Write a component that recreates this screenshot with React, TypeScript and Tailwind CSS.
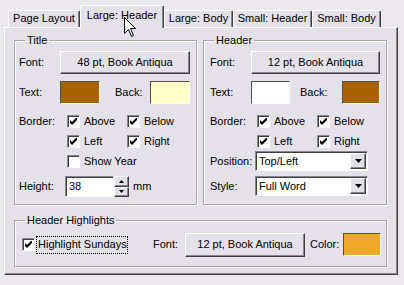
import React from "react";

const raised =
  "border-t border-l border-t-white border-l-white border-r border-b border-r-[#404040] border-b-[#404040] shadow-[inset_-1px_-1px_0_#8a8690]";
const sunken =
  "border-t border-l border-t-[#8a8690] border-l-[#8a8690] border-r border-b border-r-white border-b-white shadow-[inset_1px_1px_0_#404040]";

function Check({ checked }: { checked: boolean }) {
  return (
    <span className={`w-[13px] h-[13px] bg-white shrink-0 flex items-center justify-center ${sunken}`}>
      {checked && (
        <svg width="7" height="7" viewBox="0 0 7 7">
          <path d="M0 2 L2 4 L7 -1 L7 2 L2 7 L0 5 Z" fill="#000" />
        </svg>
      )}
    </span>
  );
}

function CheckItem({ label, checked, w }: { label: string; checked: boolean; w: string }) {
  return (
    <div className={`flex items-center gap-[4px] ${w}`}>
      <Check checked={checked} />
      <span>{label}</span>
    </div>
  );
}

function Btn({ children, w, h }: { children: React.ReactNode; w: string; h: string }) {
  return (
    <div className={`${w} ${h} ${raised} bg-[#e5e1e9] flex items-center justify-center shrink-0 whitespace-nowrap`}>{children}</div>
  );
}

function Swatch({ color, w }: { color: string; w: string }) {
  return (
    <div
      className={`${w} h-[23px] shrink-0 border-t border-l border-t-[#505050] border-l-[#505050] border-r border-b border-r-white border-b-white ${color}`}
    />
  );
}

function Select({ value }: { value: string }) {
  return (
    <div className={`w-[113px] h-[20px] bg-white flex items-center ${sunken}`}>
      <span className="flex-1 pl-[3px] pt-[1px]">{value}</span>
      <div className={`w-[16px] h-[16px] mr-[1px] bg-[#e5e1e9] ${raised} flex items-center justify-center`}>
        <svg width="7" height="4" viewBox="0 0 7 4">
          <path d="M0 0 H7 L3.5 4 Z" fill="#000" />
        </svg>
      </div>
    </div>
  );
}

function Group({ title, className, children }: { title: string; className: string; children: React.ReactNode }) {
  return (
    <fieldset
      className={`border border-[#a9a5ad] shadow-[inset_1px_1px_0_white,1px_1px_0_white] ${className}`}
    >
      <legend className="ml-[10px] px-[2px] leading-[13px]">{title}</legend>
      {children}
    </fieldset>
  );
}

export default function App() {
  const tabBase =
    "flex items-center justify-center whitespace-nowrap border-t border-l border-t-white border-l-white border-r border-r-[#404040] shadow-[inset_-1px_0_0_#8a8690] rounded-t-[2px] bg-[#e5e1e9]";
  return (
    <div
      className="relative w-[404px] h-[285px] overflow-hidden bg-[#ebe8ee] pt-[5px] pl-[4px] text-[11px] text-black"
      style={{ fontFamily: '"Liberation Sans", Arial, sans-serif' }}
    >
      <div className="flex items-end h-[22px] pl-[4px]">
        <div className={`${tabBase} w-[72px] h-[17px] pb-[1px]`}>Page Layout</div>
        <div className={`${tabBase} w-[84px] h-[23px] mb-[-1px] relative z-10 pb-[3px]`}>Large: Header</div>
        <div className={`${tabBase} w-[69px] h-[17px] pb-[1px]`}>Large: Body</div>
        <div className={`${tabBase} w-[79px] h-[17px] pb-[1px]`}>Small: Header</div>
        <div className={`${tabBase} w-[69px] h-[17px] pb-[1px]`}>Small: Body</div>
      </div>
      <div className={`w-[394px] h-[248px] bg-[#e5e1e9] ${raised} pt-[6px] pl-[9px]`}>
        <div className="flex gap-[6px]">
          <Group title="Title" className="w-[183px] h-[171px]">
            <div className="pl-[4px] pt-[4px] flex flex-col">
              <div className="flex items-center h-[23px]">
                <span className="w-[41px]">Font:</span>
                <Btn w="w-[130px]" h="h-[23px]">48 pt, Book Antiqua</Btn>
              </div>
              <div className="flex items-center h-[23px] mt-[7px]">
                <span className="w-[41px]">Text:</span>
                <Swatch color="bg-[#a86200]" w="w-[40px]" />
                <span className="w-[35px] ml-[15px]">Back:</span>
                <Swatch color="bg-[#ffffc8]" w="w-[40px]" />
              </div>
              <div className="flex items-center h-[20px] mt-[7px]">
                <span className="w-[48px]">Border:</span>
                <CheckItem label="Above" checked w="w-[60px]" />
                <CheckItem label="Below" checked w="w-[60px]" />
              </div>
              <div className="flex items-center h-[20px] pl-[48px]">
                <CheckItem label="Left" checked w="w-[60px]" />
                <CheckItem label="Right" checked w="w-[60px]" />
              </div>
              <div className="flex items-center h-[20px] pl-[48px]">
                <CheckItem label="Show Year" checked={false} w="w-[100px]" />
              </div>
              <div className="flex items-center h-[21px] mt-[5px]">
                <span className="w-[46px]">Height:</span>
                <div className={`w-[49px] h-[21px] bg-white flex items-center pl-[3px] ${sunken}`}>38</div>
                <div className="w-[15px] h-[21px] flex flex-col">
                  <div className={`flex-1 bg-[#e5e1e9] ${raised} flex items-center justify-center`}>
                    <svg width="5" height="3" viewBox="0 0 5 3">
                      <path d="M0 3 H5 L2.5 0 Z" fill="#000" />
                    </svg>
                  </div>
                  <div className={`flex-1 bg-[#e5e1e9] ${raised} flex items-center justify-center`}>
                    <svg width="5" height="3" viewBox="0 0 5 3">
                      <path d="M0 0 H5 L2.5 3 Z" fill="#000" />
                    </svg>
                  </div>
                </div>
                <span className="ml-[4px]">mm</span>
              </div>
            </div>
          </Group>
          <Group title="Header" className="w-[184px] h-[171px]">
            <div className="pl-[6px] pt-[4px] flex flex-col">
              <div className="flex items-center h-[23px]">
                <span className="w-[41px]">Font:</span>
                <Btn w="w-[129px]" h="h-[23px]">12 pt, Book Antiqua</Btn>
              </div>
              <div className="flex items-center h-[23px] mt-[7px]">
                <span className="w-[41px]">Text:</span>
                <Swatch color="bg-white" w="w-[39px]" />
                <span className="w-[42px] ml-[10px]">Back:</span>
                <Swatch color="bg-[#a86200]" w="w-[38px]" />
              </div>
              <div className="flex items-center h-[20px] mt-[7px]">
                <span className="w-[47px]">Border:</span>
                <CheckItem label="Above" checked w="w-[60px]" />
                <CheckItem label="Below" checked w="w-[60px]" />
              </div>
              <div className="flex items-center h-[20px] pl-[47px]">
                <CheckItem label="Left" checked w="w-[60px]" />
                <CheckItem label="Right" checked w="w-[60px]" />
              </div>
              <div className="flex items-center h-[20px]">
                <span className="w-[45px]">Position:</span>
                <Select value="Top/Left" />
              </div>
              <div className="flex items-center h-[20px] mt-[5px]">
                <span className="w-[45px]">Style:</span>
                <Select value="Full Word" />
              </div>
            </div>
          </Group>
        </div>
        <Group title="Header Highlights" className="w-[373px] h-[53px] mt-[9px]">
          <div className="pl-[7px] pt-[5px] flex items-center h-[30px]">
            <Check checked />
            <span className="ml-[1px] px-[1px] h-[18px] shrink-0 flex items-center whitespace-nowrap border border-dotted border-black w-[92px]">
              Highlight Sundays
            </span>
            <span className="ml-[25px] w-[32px]">Font:</span>
            <Btn w="w-[120px]" h="h-[24px]">12 pt, Book Antiqua</Btn>
            <span className="ml-[5px] w-[33px]">Color:</span>
            <Swatch color="bg-[#f0a828]" w="w-[38px]" />
          </div>
        </Group>
      </div>
      <svg className="absolute left-[124px] top-[17px] z-20" width="13" height="21" viewBox="0 0 13 21">
        <path
          d="M0.5 0.5 L0.5 16.5 L4.5 12.5 L7.5 19.5 L9.5 18.5 L6.5 11.5 L11.5 11.5 Z"
          fill="#fff"
          stroke="#000"
          strokeWidth="1"
        />
      </svg>
    </div>
  );
}
